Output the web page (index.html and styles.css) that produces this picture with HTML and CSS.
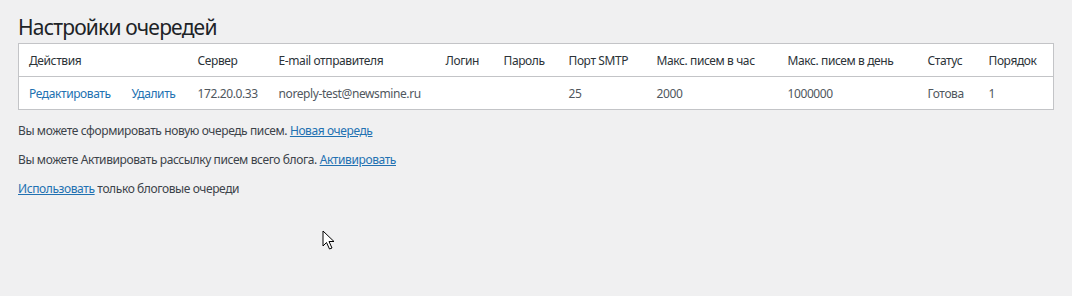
FILE: index.html
```html
<!DOCTYPE html>
<html lang="ru">
<head>
<meta charset="utf-8">
<title>Настройки очередей</title>
<link rel="stylesheet" href="styles.css">
</head>
<body>
<div class="wrap">
  <h1 class="title">Настройки очередей</h1>
  <table class="queues">
    <colgroup>
      <col class="c1"><col class="c2"><col class="c3"><col class="c4"><col class="c5"><col class="c6"><col class="c7"><col class="c8"><col class="c9"><col class="c10"><col class="c11">
    </colgroup>
    <thead>
      <tr>
        <th>Действия</th><th></th><th>Сервер</th><th>E-mail отправителя</th><th>Логин</th><th>Пароль</th><th>Порт SMTP</th><th>Макс. писем в час</th><th>Макс. писем в день</th><th>Статус</th><th>Порядок</th>
      </tr>
    </thead>
    <tbody>
      <tr>
        <td><a href="#">Редактировать</a></td><td><a href="#">Удалить</a></td><td>172.20.0.33</td><td>noreply-test@newsmine.ru</td><td></td><td></td><td>25</td><td>2000</td><td>1000000</td><td>Готова</td><td class="plain">1</td>
      </tr>
    </tbody>
  </table>
  <p class="note">Вы можете сформировать новую очередь писем. <a class="ul" href="#">Новая очередь</a></p>
  <p class="note">Вы можете Активировать рассылку писем всего блога. <a class="ul" href="#">Активировать</a></p>
  <p class="note"><a class="ul" href="#">Использовать</a> только блоговые очереди</p>
</div>
<svg class="cursor" width="14" height="22" viewBox="0 0 14 22"><path d="M1 1 L1 16 L4.5 12.5 L7.5 19 L10 18 L7 11.5 L12 11.5 Z" fill="#fff" stroke="#000" stroke-width="1"/></svg>
</body>
</html>
```
FILE: styles.css
```css
html, body {
  margin: 0;
  padding: 0;
  background: #f0f0f1;
}
body {
  font-family: "Noto Sans", "Open Sans", sans-serif;
  font-size: 12px;
  letter-spacing: -0.4px;
  color: #3c434a;
  position: relative;
  height: 296px;
  overflow: hidden;
}
.wrap {
  padding: 14px 19px 0 18px;
}
.title {
  font-size: 21px;
  font-weight: 400;
  letter-spacing: -0.8px;
  color: #1d2327;
  margin: 0 0 2px 0;
  line-height: 27px;
}
.queues {
  width: 1036px;
  border-collapse: collapse;
  table-layout: fixed;
  background: #fff;
  border: 1px solid #c3c4c7;
}
.c1 { width: 103px; }
.c2 { width: 66px; }
.c3 { width: 81px; }
.c4 { width: 167px; }
.c5 { width: 58px; }
.c6 { width: 65px; }
.c7 { width: 88px; }
.c8 { width: 131px; }
.c9 { width: 140px; }
.c10 { width: 61px; }
.c11 { width: auto; }
.queues th, .queues td {
  text-align: left;
  font-weight: 400;
  padding: 0 0 0 10px;
  height: 32px;
  white-space: nowrap;
  overflow: hidden;
}
.queues th {
  color: #2c3338;
  border-bottom: 1px solid #c3c4c7;
}
.queues td {
  color: #50575e;
}
.queues td.plain {
  color: #50575e;
}
.queues a {
  color: #2271b1;
  text-decoration: none;
}
.note {
  margin: 0;
  height: 29px;
  line-height: 20px;
}
.queues + .note {
  margin-top: 11px;
}
.note a.ul {
  color: #2271b1;
  text-decoration: underline;
}
.cursor {
  position: absolute;
  left: 322px;
  top: 230px;
}
```
